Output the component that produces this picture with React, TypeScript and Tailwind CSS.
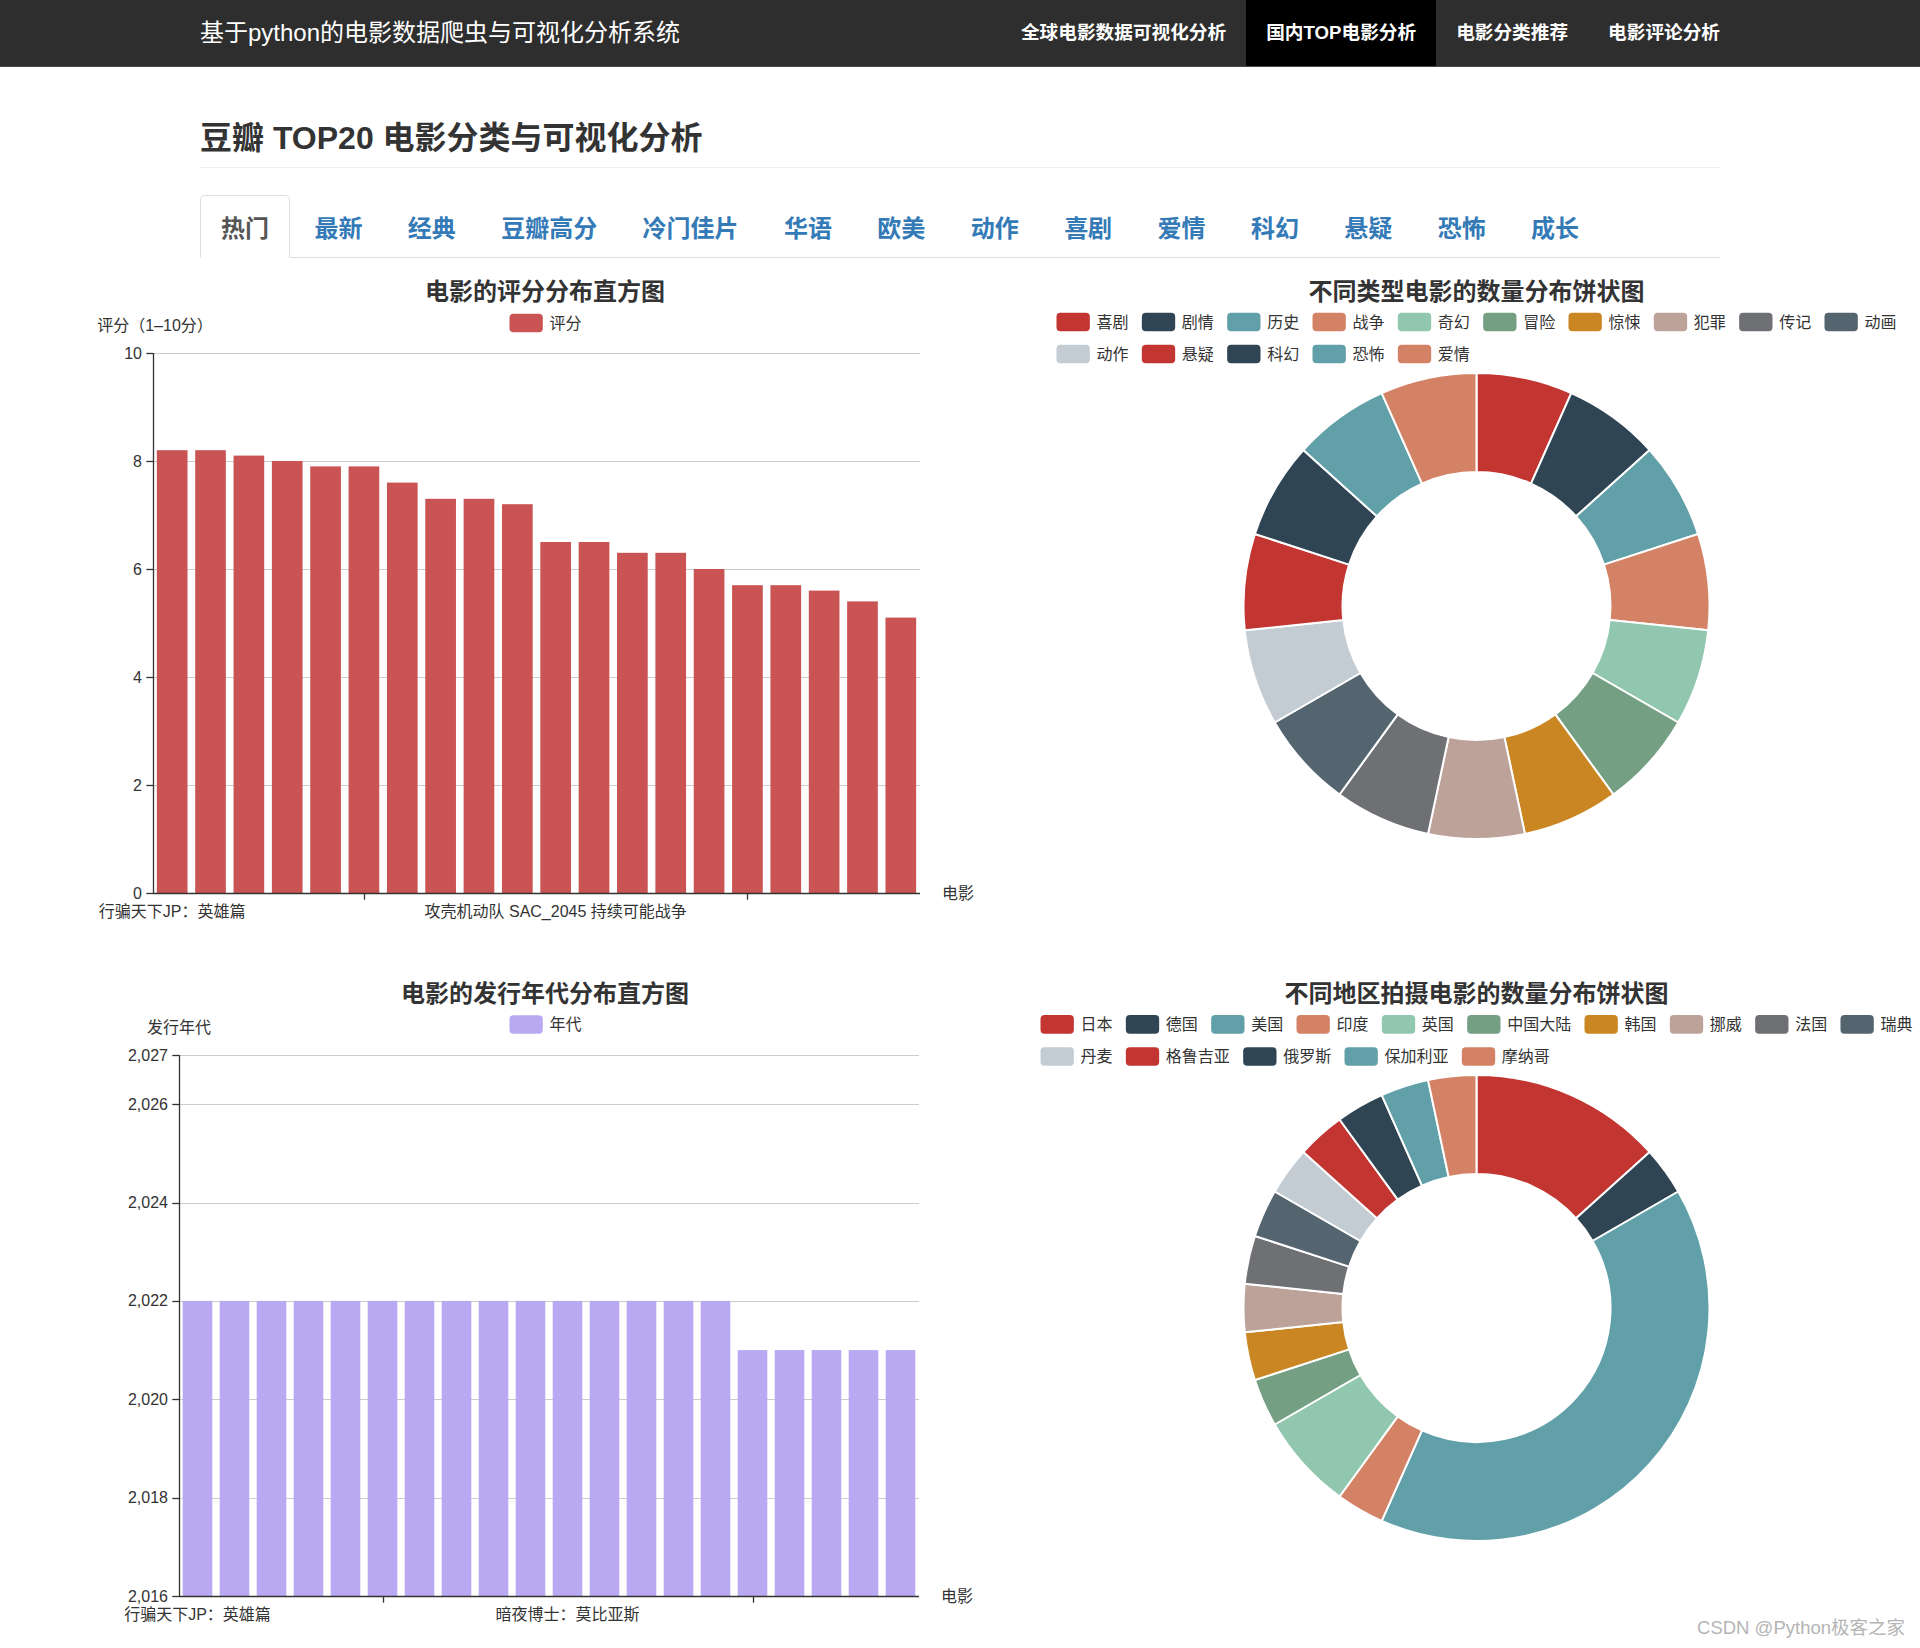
import React from 'react';

const PAL = ['#c23531', '#2f4554', '#61a0a8', '#d48265', '#91c7ae', '#749f83', '#ca8622', '#bda29a', '#6e7074', '#546570', '#c4ccd3'];

type BarProps = {
  w: number;
  h: number;
  title: string;
  legend: string;
  legendY: number;
  color: string;
  yName: string;
  yNameDx: number;
  yMin: number;
  yMax: number;
  ticks: number[];
  fmt: (v: number) => string;
  data: number[];
  gl: number;
  gr: number;
  gt: number;
  gb: number;
  labels: { i: number; text: string }[];
  labelY: number;
};

function BarChart(p: BarProps) {
  const band = (p.gr - p.gl) / p.data.length;
  const Y = (v: number) => p.gb - ((v - p.yMin) / (p.yMax - p.yMin)) * (p.gb - p.gt);
  return (
    <svg width={p.w} height={p.h} className="block shrink-0 font-['Liberation_Sans','Noto_Sans_CJK_SC',sans-serif]">
      <text x={465} y={21} textAnchor="middle" dominantBaseline="central" fontSize={24} fontWeight="bold" fill="#333">
        {p.title}
      </text>
      <rect x={429.5} y={p.legendY - 9.33} width={33.3} height={18.67} rx={4} fill={p.color} />
      <text x={469.5} y={p.legendY} dominantBaseline="central" fontSize={16} fill="#333">
        {p.legend}
      </text>
      <text x={p.gl + p.yNameDx} y={55} textAnchor="middle" dominantBaseline="central" fontSize={16} fill="#333">
        {p.yName}
      </text>
      {p.ticks.map((v) =>
        v === p.yMin ? null : (
          <line key={'g' + v} x1={p.gl} x2={p.gr} y1={Math.round(Y(v)) + 0.5} y2={Math.round(Y(v)) + 0.5} stroke="#ccc" strokeWidth={1} />
        )
      )}
      {p.data.map((v, i) => (
        <rect key={'b' + i} x={p.gl + i * band + band * 0.1} y={Y(v)} width={band * 0.8} height={p.gb - Y(v)} fill={p.color} />
      ))}
      <line x1={p.gl + 0.5} x2={p.gl + 0.5} y1={p.gt} y2={p.gb} stroke="#333" strokeWidth={1.3} />
      <line x1={p.gl} x2={p.gr} y1={p.gb + 0.5} y2={p.gb + 0.5} stroke="#333" strokeWidth={1.3} />
      {p.ticks.map((v) => (
        <g key={'t' + v}>
          <line x1={p.gl - 6.7} x2={p.gl} y1={Math.round(Y(v)) + 0.5} y2={Math.round(Y(v)) + 0.5} stroke="#333" strokeWidth={1.3} />
          <text x={p.gl - 11} y={Y(v)} textAnchor="end" dominantBaseline="central" fontSize={16} fill="#333">
            {p.fmt(v)}
          </text>
        </g>
      ))}
      {[5.5, 15.5].map((k) => (
        <line key={'x' + k} x1={Math.round(p.gl + k * band) + 0.5} x2={Math.round(p.gl + k * band) + 0.5} y1={p.gb} y2={p.gb + 6.7} stroke="#333" strokeWidth={1.3} />
      ))}
      {p.labels.map((l) => (
        <text key={'l' + l.i} x={p.gl + (l.i + 0.5) * band} y={p.labelY} textAnchor="middle" dominantBaseline="central" fontSize={16} fill="#333">
          {l.text}
        </text>
      ))}
      <text x={p.gr + 22} y={p.gb} dominantBaseline="central" fontSize={16} fill="#333">
        电影
      </text>
    </svg>
  );
}

function sector(cx: number, cy: number, r0: number, r1: number, a0: number, a1: number) {
  const pt = (r: number, a: number) => [cx + r * Math.sin((a * Math.PI) / 180), cy - r * Math.cos((a * Math.PI) / 180)];
  const large = a1 - a0 > 180 ? 1 : 0;
  const [x0, y0] = pt(r1, a0);
  const [x1, y1] = pt(r1, a1);
  const [x2, y2] = pt(r0, a1);
  const [x3, y3] = pt(r0, a0);
  return `M${x0} ${y0} A${r1} ${r1} 0 ${large} 1 ${x1} ${y1} L${x2} ${y2} A${r0} ${r0} 0 ${large} 0 ${x3} ${y3} Z`;
}

type DonutProps = {
  w: number;
  h: number;
  title: string;
  data: [string, number][];
  legendY: number[];
};

function Donut(p: DonutProps) {
  const cx = 465;
  const cy = 336;
  const total = p.data.reduce((s, d) => s + d[1], 0);
  const items = p.data.map((d, i) => ({ name: d[0], w: 33.33 + 6.67 + d[0].length * 16, color: PAL[i % PAL.length] }));
  const rows = [items.slice(0, 10), items.slice(10)];
  const rowW = (r: typeof items) => r.reduce((s, it) => s + it.w, 0) + 13.33 * (r.length - 1);
  const maxW = Math.max(rowW(rows[0]), rowW(rows[1]));
  const startX = cx + 0.5 - maxW / 2;
  let acc = 0;
  const slices = p.data.map((d, i) => {
    const a0 = (acc / total) * 360;
    acc += d[1];
    const a1 = (acc / total) * 360;
    return <path key={'s' + i} d={sector(cx + 0.5, cy, 134, 233, a0, a1)} fill={PAL[i % PAL.length]} stroke="#fff" strokeWidth={2} strokeLinejoin="round" />;
  });
  return (
    <svg width={p.w} height={p.h} className="block shrink-0 font-['Liberation_Sans','Noto_Sans_CJK_SC',sans-serif]">
      <text x={cx + 0.5} y={21} textAnchor="middle" dominantBaseline="central" fontSize={24} fontWeight="bold" fill="#333">
        {p.title}
      </text>
      {rows.map((r, ri) => {
        let x = startX;
        return r.map((it) => {
          const gx = x;
          x += it.w + 13.33;
          return (
            <g key={it.name + ri}>
              <rect x={gx} y={p.legendY[ri] - 9.33} width={33.33} height={18.67} rx={4} fill={it.color} />
              <text x={gx + 40} y={p.legendY[ri]} dominantBaseline="central" fontSize={16} fill="#333">
                {it.name}
              </text>
            </g>
          );
        });
      })}
      {slices}
    </svg>
  );
}

const TABS = ['热门', '最新', '经典', '豆瓣高分', '冷门佳片', '华语', '欧美', '动作', '喜剧', '爱情', '科幻', '悬疑', '恐怖', '成长'];
const NAV = ['全球电影数据可视化分析', '国内TOP电影分析', '电影分类推荐', '电影评论分析'];

const SCORES = [8.2, 8.2, 8.1, 8.0, 7.9, 7.9, 7.6, 7.3, 7.3, 7.2, 6.5, 6.5, 6.3, 6.3, 6.0, 5.7, 5.7, 5.6, 5.4, 5.1];
const YEARS = [2022, 2022, 2022, 2022, 2022, 2022, 2022, 2022, 2022, 2022, 2022, 2022, 2022, 2022, 2022, 2021, 2021, 2021, 2021, 2021];

const GENRES: [string, number][] = ['喜剧', '剧情', '历史', '战争', '奇幻', '冒险', '惊悚', '犯罪', '传记', '动画', '动作', '悬疑', '科幻', '恐怖', '爱情'].map((g) => [g, 1]);
const REGIONS: [string, number][] = [
  ['日本', 4],
  ['德国', 1],
  ['美国', 12],
  ['印度', 1],
  ['英国', 2],
  ['中国大陆', 1],
  ['韩国', 1],
  ['挪威', 1],
  ['法国', 1],
  ['瑞典', 1],
  ['丹麦', 1],
  ['格鲁吉亚', 1],
  ['俄罗斯', 1],
  ['保加利亚', 1],
  ['摩纳哥', 1],
];

export default function App() {
  return (
    <div className="relative w-full min-h-[1648px] overflow-hidden bg-white font-['Liberation_Sans','Noto_Sans_CJK_SC',sans-serif] text-[#333]">
      <nav className="h-[67px] bg-[#2e2e2e] border-b border-[#4a4a4a]">
        <div className="w-[1520px] mx-auto h-full flex items-center">
          <div className="text-[24px] text-white leading-none">基于python的电影数据爬虫与可视化分析系统</div>
          <ul className="ml-auto mr-[-20px] flex h-full">
            {NAV.map((n, i) => (
              <li key={n} className={i === 1 ? 'h-full flex items-center px-[20px] bg-black' : 'h-full flex items-center px-[20px]'}>
                <span className="text-[18.67px] font-bold text-white">{n}</span>
              </li>
            ))}
          </ul>
        </div>
      </nav>

      <div className="w-[1520px] mx-auto">
        <h3 className="pt-[54px] pb-[11px] border-b border-[#eee] text-[32px] font-bold leading-[35px] text-[#333]">豆瓣 TOP20 电影分类与可视化分析</h3>
        <ul className="mt-[27px] flex border-b border-[#ddd]">
          {TABS.map((t, i) => (
            <li key={t} className="mb-[-1px] mr-[3.4px]">
              <span
                className={
                  i === 0
                    ? 'block px-[20px] h-[63px] pt-[2px] leading-[61px] border border-[#ddd] border-b-white bg-white rounded-t-[5px] text-[#555] font-bold text-[24px]'
                    : 'block px-[20px] h-[63px] pt-[2px] leading-[61px] border border-transparent rounded-t-[5px] text-[#337ab7] font-bold text-[24px]'
                }
              >
                {t}
              </span>
            </li>
          ))}
        </ul>
      </div>

      <div className="mt-[12px] pl-[80px] flex flex-col">
        <div className="flex">
          <BarChart
            w={931}
            h={702}
            title="电影的评分分布直方图"
            legend="评分"
            legendY={53}
            color="#ca5454"
            yName="评分（1–10分）"
            yNameDx={2}
            yMin={0}
            yMax={10}
            ticks={[0, 2, 4, 6, 8, 10]}
            fmt={(v) => String(v)}
            data={SCORES}
            gl={73}
            gr={840}
            gt={83}
            gb={623}
            labels={[
              { i: 0, text: '行骗天下JP：英雄篇' },
              { i: 10, text: '攻壳机动队 SAC_2045 持续可能战争' },
            ]}
            labelY={641}
          />
          <Donut w={909} h={702} title="不同类型电影的数量分布饼状图" data={GENRES} legendY={[52, 84]} />
        </div>
        <div className="flex">
          <BarChart
            w={931}
            h={676}
            title="电影的发行年代分布直方图"
            legend="年代"
            legendY={52.5}
            color="#b9a9f2"
            yName="发行年代"
            yNameDx={0}
            yMin={2016}
            yMax={2027}
            ticks={[2016, 2018, 2020, 2022, 2024, 2026, 2027]}
            fmt={(v) => v.toLocaleString('en-US')}
            data={YEARS}
            gl={99}
            gr={839}
            gt={83}
            gb={624}
            labels={[
              { i: 0, text: '行骗天下JP：英雄篇' },
              { i: 10, text: '暗夜博士：莫比亚斯' },
            ]}
            labelY={642.5}
          />
          <Donut w={909} h={676} title="不同地区拍摄电影的数量分布饼状图" data={REGIONS} legendY={[52.4, 84.5]} />
        </div>
      </div>

      <div className="absolute right-[15px] bottom-[8px] text-[18.5px] leading-[24px] text-[#b5b5b5]">CSDN @Python极客之家</div>
    </div>
  );
}
